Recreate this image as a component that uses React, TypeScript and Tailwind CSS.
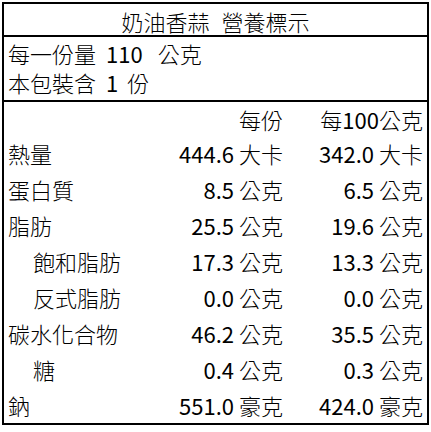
const rows = [
  { label: '熱量', perServing: '444.6', per100: '342.0', unit: '大卡', indent: false },
  { label: '蛋白質', perServing: '8.5', per100: '6.5', unit: '公克', indent: false },
  { label: '脂肪', perServing: '25.5', per100: '19.6', unit: '公克', indent: false },
  { label: '飽和脂肪', perServing: '17.3', per100: '13.3', unit: '公克', indent: true },
  { label: '反式脂肪', perServing: '0.0', per100: '0.0', unit: '公克', indent: true },
  { label: '碳水化合物', perServing: '46.2', per100: '35.5', unit: '公克', indent: false },
  { label: '糖', perServing: '0.4', per100: '0.3', unit: '公克', indent: true },
  { label: '鈉', perServing: '551.0', per100: '424.0', unit: '豪克', indent: false },
];

const Value = ({ amount, unit }: { amount: string; unit: string }) => (
  <span className="whitespace-nowrap">
    <span className="font-normal">{amount}</span>
    <span className="ml-[5px]">{unit}</span>
  </span>
);

export default function App() {
  return (
    <div className="bg-white p-[2px] font-['Noto_Sans_CJK_TC',sans-serif] text-[22px] font-light text-black">
      <div className="w-[427px] border-2 border-black">
        <div className="flex h-[33px] items-center justify-center border-b-2 border-black pt-[2px] leading-none">
          <span>奶油香蒜</span>
          <span className="ml-[12px]">營養標示</span>
        </div>

        <div className="h-[65px] border-b-2 border-black pl-[4px] pt-[2px] leading-[29px]">
          <div className="flex">
            <span>每一份量</span>
            <span className="ml-[10px] font-normal">110</span>
            <span className="ml-[15px]">公克</span>
          </div>
          <div className="flex">
            <span>本包裝含</span>
            <span className="ml-[10px] font-normal">1</span>
            <span className="ml-[9px]">份</span>
          </div>
        </div>

        <div className="h-[321px] pl-[4px] pr-[4px] leading-none">
          <div className="flex h-[33px] items-center">
            <span className="flex-1" />
            <span className="text-right">每份</span>
            <span className="w-[140px] text-right">
              每<span className="font-normal">100</span>公克
            </span>
          </div>
          {rows.map((row) => (
            <div key={row.label} className="flex h-[36px] items-center">
              <span className={`flex-1 ${row.indent ? 'pl-[25px]' : ''}`}>{row.label}</span>
              <span className="text-right">
                <Value amount={row.perServing} unit={row.unit} />
              </span>
              <span className="w-[140px] text-right">
                <Value amount={row.per100} unit={row.unit} />
              </span>
            </div>
          ))}
        </div>
      </div>
    </div>
  );
}
